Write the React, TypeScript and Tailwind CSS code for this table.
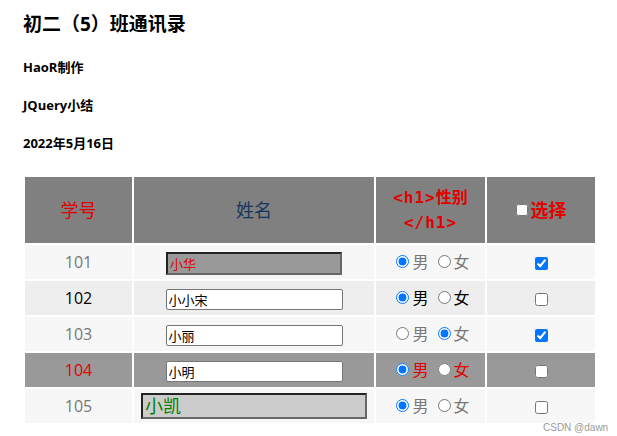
import React from 'react'

type Row = {
  id: string
  name: string
  male: boolean
  picked: boolean
  rowCls: string
  inputCls: string
}

const rows: Row[] = [
  {
    id: '101',
    name: '小华',
    male: true,
    picked: true,
    rowCls: 'bg-[#f7f7f7] text-[#777777]',
    inputCls:
      'w-[176px] h-[23px] bg-[#999999] text-[#e00000] text-[13px] border-2 border-t-[#222] border-l-[#222] border-b-[#666] border-r-[#666]',
  },
  {
    id: '102',
    name: '小小宋',
    male: true,
    picked: false,
    rowCls: 'bg-[#eeeeee] text-black',
    inputCls:
      'w-[177px] h-[21px] bg-white text-black text-[13px] border border-[#767676] rounded-[2px]',
  },
  {
    id: '103',
    name: '小丽',
    male: false,
    picked: true,
    rowCls: 'bg-[#f7f7f7] text-[#777777]',
    inputCls:
      'w-[177px] h-[21px] bg-white text-black text-[13px] border border-[#767676] rounded-[2px]',
  },
  {
    id: '104',
    name: '小明',
    male: true,
    picked: false,
    rowCls: 'bg-[#999999] text-[#e00000]',
    inputCls:
      'w-[177px] h-[21px] bg-white text-black text-[13px] border border-[#767676] rounded-[2px]',
  },
  {
    id: '105',
    name: '小凯',
    male: true,
    picked: false,
    rowCls: 'bg-[#f7f7f7] text-[#777777]',
    inputCls:
      'w-[226px] h-[26px] bg-[#cccccc] text-[#008000] text-[18px] border-2 border-t-[#222] border-l-[#222] border-b-[#666] border-r-[#666]',
  },
]

const App = () => {
  return (
    <div className="relative w-[617px] h-[436px] overflow-hidden bg-white font-['Open_Sans','Noto_Sans_CJK_SC',sans-serif]">
      <div className="flex flex-col px-[23px]">
        <h3 className="mt-[12px] text-[19px] leading-[24px] font-bold text-black">初二（5）班通讯录</h3>
        <h5 className="mt-[23px] text-[13px] leading-[17px] font-bold">HaoR制作</h5>
        <h5 className="mt-[21px] text-[13px] leading-[17px] font-bold">JQuery小结</h5>
        <h5 className="mt-[21px] text-[13px] leading-[17px] font-bold">2022年5月16日</h5>

        <table className="mt-[23px] w-[574px] table-fixed border-separate border-spacing-[2px]">
          <colgroup>
            <col className="w-[107px]" />
            <col className="w-[240px]" />
            <col className="w-[109px]" />
            <col className="w-[108px]" />
          </colgroup>
          <thead>
            <tr className="h-[66px] bg-[#808080]">
              <th className="p-0 text-[18px] font-normal text-[#e00000]">学号</th>
              <th className="p-0 text-[18px] font-normal text-[#17375e]">姓名</th>
              <th className="p-0 text-[16px] leading-[25px] font-bold text-[#e00000]">
                <span className="font-['DejaVu_Sans_Mono',monospace] tracking-[1px]">{'<h1>'}</span>性别
                <br />
                <span className="font-['DejaVu_Sans_Mono',monospace] tracking-[1px]">{'</h1>'}</span>
              </th>
              <th className="p-0 text-[18px] font-bold text-[#e00000]">
                <span className="inline-flex items-center">
                  <input type="checkbox" className="mr-[3px] w-[12px] h-[12px]" />
                  选择
                </span>
              </th>
            </tr>
          </thead>
          <tbody>
            {rows.map((r) => (
              <tr key={r.id} className={`h-[34px] ${r.rowCls}`}>
                <td className="p-0 text-center text-[16px]">{r.id}</td>
                <td className="p-0 text-center">
                  <input
                    type="text"
                    defaultValue={r.name}
                    className={`px-[2px] align-middle outline-none ${r.inputCls}`}
                  />
                </td>
                <td className="p-0 text-center text-[16px]">
                  <span className="inline-flex items-center">
                    <input
                      type="radio"
                      name={`sex${r.id}`}
                      defaultChecked={r.male}
                      className="ml-[5px] mr-[3px] w-[13px] h-[13px]"
                    />
                    男
                    <input
                      type="radio"
                      name={`sex${r.id}`}
                      defaultChecked={!r.male}
                      className="ml-[9px] mr-[3px] w-[13px] h-[13px]"
                    />
                    女
                  </span>
                </td>
                <td className="p-0 text-center">
                  <input
                    type="checkbox"
                    defaultChecked={r.picked}
                    className="w-[13px] h-[13px] align-middle"
                  />
                </td>
              </tr>
            ))}
          </tbody>
        </table>
      </div>

      <span className="absolute left-[543px] top-[421px] text-[10px] leading-[14px] text-[#9a9a9a] font-['Liberation_Sans',sans-serif]">
        CSDN @dawn
      </span>
    </div>
  )
}

export default App
